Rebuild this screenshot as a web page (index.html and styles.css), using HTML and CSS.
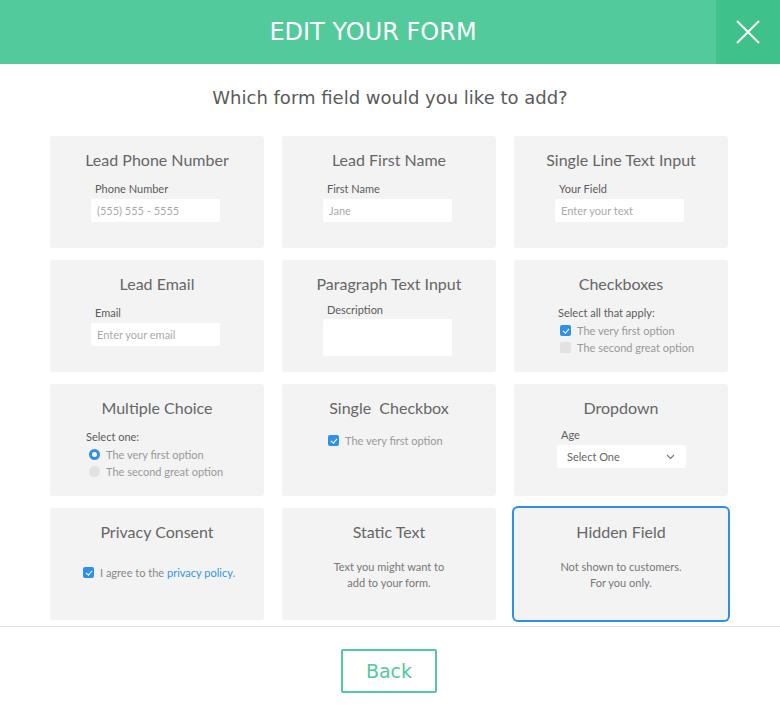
FILE: index.html
```html
<!DOCTYPE html>
<html lang="en">
<head>
    <meta charset="UTF-8">
    <meta name="viewport" content="width=device-width, initial-scale=1.0">
    <title>Edit Your Form</title>
    <link rel="stylesheet" href="styles.css">
</head>
<body>
    <div class="modal">
        <div class="modal-header">
            <h1>EDIT YOUR FORM</h1>
            <button type="button" class="close-button" aria-label="Close">
                <svg width="24" height="24" viewBox="0 0 24 24">
                    <path d="M1 1 L23 23 M23 1 L1 23" stroke="#fff" stroke-width="2" fill="none"/>
                </svg>
            </button>
        </div>

        <p class="subtitle">Which form field would you like to add?</p>

        <div class="field-grid">
            <div class="field-card">
                <div class="card-title">Lead Phone Number</div>
                <div class="preview">
                    <div class="preview-label">Phone Number</div>
                    <div class="preview-input">(555) 555 - 5555</div>
                </div>
            </div>

            <div class="field-card">
                <div class="card-title">Lead First Name</div>
                <div class="preview">
                    <div class="preview-label">First Name</div>
                    <div class="preview-input">Jane</div>
                </div>
            </div>

            <div class="field-card">
                <div class="card-title">Single Line Text Input</div>
                <div class="preview">
                    <div class="preview-label">Your Field</div>
                    <div class="preview-input">Enter your text</div>
                </div>
            </div>

            <div class="field-card">
                <div class="card-title">Lead Email</div>
                <div class="preview">
                    <div class="preview-label">Email</div>
                    <div class="preview-input">Enter your email</div>
                </div>
            </div>

            <div class="field-card">
                <div class="card-title">Paragraph Text Input</div>
                <div class="preview paragraph">
                    <div class="preview-label">Description</div>
                    <div class="preview-input textarea"></div>
                </div>
            </div>

            <div class="field-card">
                <div class="card-title">Checkboxes</div>
                <div class="preview options">
                    <div class="preview-label">Select all that apply:</div>
                    <div class="option"><span class="check on"></span>The very first option</div>
                    <div class="option"><span class="check"></span>The second great option</div>
                </div>
            </div>

            <div class="field-card">
                <div class="card-title">Multiple Choice</div>
                <div class="preview options choice">
                    <div class="preview-label">Select one:</div>
                    <div class="option"><span class="radio on"></span>The very first option</div>
                    <div class="option"><span class="radio"></span>The second great option</div>
                </div>
            </div>

            <div class="field-card">
                <div class="card-title">Single&nbsp; Checkbox</div>
                <div class="preview single">
                    <div class="option"><span class="check on"></span>The very first option</div>
                </div>
            </div>

            <div class="field-card">
                <div class="card-title">Dropdown</div>
                <div class="preview dropdown">
                    <div class="preview-label">Age</div>
                    <div class="preview-input select">
                        Select One
                        <svg width="9" height="6" viewBox="0 0 9 6">
                            <path d="M1 1 L4.5 4.5 L8 1" stroke="#777" stroke-width="1.1" fill="none"/>
                        </svg>
                    </div>
                </div>
            </div>

            <div class="field-card">
                <div class="card-title">Privacy Consent</div>
                <div class="preview consent">
                    <div class="option"><span class="check on"></span>I agree to the&nbsp;<a href="#">privacy policy</a>.</div>
                </div>
            </div>

            <div class="field-card">
                <div class="card-title">Static Text</div>
                <p class="card-text">Text you might want to<br>add to your form.</p>
            </div>

            <div class="field-card selected">
                <div class="card-title">Hidden Field</div>
                <p class="card-text">Not shown to customers.<br>For you only.</p>
            </div>
        </div>

        <div class="modal-footer">
            <button type="button" class="back-button">Back</button>
        </div>
    </div>
</body>
</html>
```

FILE: styles.css
```css
body {
    margin: 0;
    background: #fff;
    font-family: "DejaVu Sans", sans-serif;
}

.modal {
    width: 780px;
    height: 716px;
    overflow: hidden;
}

.modal-header {
    display: flex;
    height: 64px;
    background: #52ca9b;
}

.modal-header h1 {
    flex: 1;
    margin: 0;
    padding-left: 30px;
    text-align: center;
    line-height: 64px;
    font-size: 24px;
    font-weight: normal;
    color: #fff;
}

.close-button {
    width: 64px;
    height: 64px;
    border: none;
    padding: 0;
    background: #3fc18b;
    display: flex;
    justify-content: center;
    align-items: center;
    cursor: pointer;
}

.subtitle {
    margin: 22px 0 26px;
    text-align: center;
    font-size: 18px;
    line-height: 24px;
    color: #5a5a5a;
}

.field-grid {
    display: grid;
    grid-template-columns: repeat(3, 214px);
    grid-auto-rows: 112px;
    column-gap: 18px;
    row-gap: 12px;
    padding-left: 50px;
}

.field-card {
    background: #f3f3f3;
    border-radius: 3px;
    font-family: Lato, "Open Sans", sans-serif;
    color: #666;
}

.field-card.selected {
    box-shadow: 0 0 0 2px #2e8fe8;
    border-radius: 4px;
}

.card-title {
    margin-top: 14px;
    text-align: center;
    font-size: 16px;
    line-height: 20px;
    color: #666;
}

/* mini previews of each field type */
.preview {
    width: 129px;
    margin: 12px 0 0 41px;
}

.preview.paragraph {
    margin-top: 9px;
}

.preview.dropdown {
    margin: 10px 0 0 43px;
}

.preview-label {
    padding-left: 4px;
    font-size: 11px;
    line-height: 14px;
    color: #5c5c5c;
}

.preview-input {
    margin-top: 3px;
    height: 23px;
    padding-left: 6px;
    background: #fff;
    border-radius: 2px;
    font-size: 11px;
    line-height: 23px;
    color: #aaa;
}

.preview-input.textarea {
    height: 37px;
    margin-top: 2px;
}

.preview-input.select {
    display: flex;
    justify-content: space-between;
    align-items: center;
    padding: 0 11px 0 10px;
    color: #666;
}

.options {
    width: 160px;
    margin: 12px 0 0 44px;
}

.options .preview-label {
    padding-left: 0;
    margin-bottom: 2px;
}

.choice {
    margin-left: 36px;
}

.option {
    display: flex;
    align-items: center;
    height: 17px;
    font-size: 11px;
    color: #999;
}

.check {
    width: 11px;
    height: 11px;
    margin: 0 6px 0 2px;
    border-radius: 2px;
    background: #e2e2e2;
    position: relative;
}

.check.on {
    background: #2f90eb;
}

.check.on::after {
    content: "";
    position: absolute;
    left: 3.5px;
    top: 1.5px;
    width: 2.5px;
    height: 5px;
    border: solid #fff;
    border-width: 0 1.2px 1.2px 0;
    transform: rotate(40deg);
}

.radio {
    width: 11px;
    height: 11px;
    margin: 0 6px 0 3px;
    border-radius: 50%;
    background: #e2e2e2;
    box-sizing: border-box;
}

.radio.on {
    background: #fff;
    border: 3px solid #2f90eb;
}

.single {
    width: auto;
    margin: 14px 0 0 44px;
}

.consent {
    width: auto;
    margin: 22px 0 0 31px;
}

.consent .option {
    color: #888;
}

.consent a {
    color: #2f95eb;
    text-decoration: none;
}

.card-text {
    margin: 17px 0 0;
    text-align: center;
    font-size: 11px;
    line-height: 16px;
    color: #777;
}

.modal-footer {
    margin-top: 6px;
    border-top: 1px solid #e3e3e3;
    display: flex;
    justify-content: center;
    padding: 22px 2px 0 0;
}

.back-button {
    width: 96px;
    height: 44px;
    border: 2px solid #52ca9b;
    border-radius: 2px;
    background: #fff;
    color: #52ca9b;
    font-family: "DejaVu Sans", sans-serif;
    font-size: 19px;
    cursor: pointer;
}
```
